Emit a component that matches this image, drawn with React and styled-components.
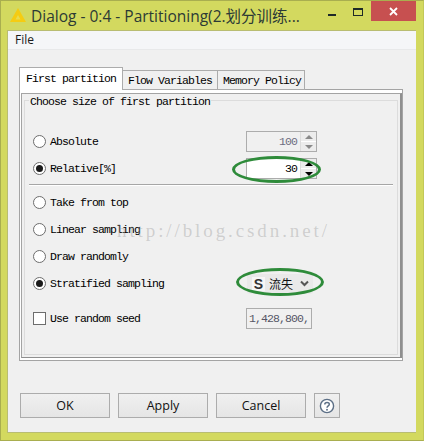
import React from 'react'
import styled, { createGlobalStyle } from 'styled-components'

const Global = createGlobalStyle`
html, body { margin: 0; padding: 0; }
* { box-sizing: border-box; }
`

const monoText = `
font-family: "Liberation Mono", "DejaVu Sans Mono", monospace;
font-size: 11.5px;
letter-spacing: -0.9px;
color: #000;
white-space: nowrap;
`

const Window = styled.div`
position: relative;
width: 424px;
height: 441px;
background: #d3d95f;
border: 1px solid #a9ae4f;
border-right-color: #c2c858;
display: flex;
flex-direction: column;
padding: 0 7px 7px 6px;
overflow: hidden;
`
const TitleBar = styled.div`
height: 29px;
flex: none;
display: flex;
align-items: flex-start;
`
const AppIcon = styled.svg`
width: 16px;
height: 14px;
margin: 7px 0 0 3px;
flex: none;
`
const Title = styled.div`
font-family: "Open Sans", "Noto Sans CJK SC", sans-serif;
font-size: 15.5px;
line-height: 21px;
margin: 5px 0 0 5px;
color: #2c3a35;
white-space: nowrap;
width: 277px;
flex: none;
`
const Minimize = styled.div`
width: 8px;
height: 2px;
background: #1e2a28;
margin: 13px 0 0 20px;
flex: none;
`
const Maximize = styled.div`
width: 10px;
height: 8px;
border: 1px solid #1e2a28;
border-top-width: 2px;
margin: 7px 0 0 17px;
flex: none;
`
const Close = styled.div`
width: 45px;
height: 20px;
background: #c75050;
margin-left: 8px;
flex: none;
display: flex;
align-items: center;
justify-content: center;
`
const Client = styled.div`
flex: 1;
background: #f0f0f0;
border: 1px solid #b9bd72;
border-width: 1px 0 1px 1px;
display: flex;
flex-direction: column;
`
const MenuBar = styled.div`
height: 19px;
background: #f5f6f8;
border-bottom: 1px solid #e8e9ea;
font-family: "Open Sans", sans-serif;
font-size: 12px;
line-height: 18px;
color: #1a1a1a;
padding-left: 7px;
flex: none;
`
const Body = styled.div`
flex: 1;
display: flex;
flex-direction: column;
padding: 17px 13px 0 11px;
`
const Tabs = styled.div`
display: flex;
align-items: flex-end;
height: 23px;
margin-bottom: -1px;
position: relative;
z-index: 1;
flex: none;
`
const Tab = styled.div`
${monoText}
height: ${p => (p.$active ? '23px' : '20px')};
width: ${p => p.$w}px;
background: ${p => (p.$active ? '#fff' : '#f0f0f0')};
border: 1px solid #acacac;
border-bottom: ${p => (p.$active ? 'none' : '1px solid #acacac')};
border-left: ${p => (p.$first || p.$active ? '1px solid #acacac' : 'none')};
padding-left: ${p => (p.$active ? 6 : 5)}px;
line-height: ${p => (p.$active ? '21px' : '20px')};
`
const PanelOuter = styled.div`
width: 384px;
height: 272px;
border: 1px solid #a4a4a4;
background: #fff;
padding: 3px 0 0 1px;
flex: none;
`
const PanelInner = styled.div`
width: 381px;
height: 265px;
border: 1px solid #a4a4a4;
border-right: 2px solid #8f8f8f;
border-bottom-color: #8f8f8f;
background: #f0f0f0;
padding: 6px 3px 2px 2px;
`
const Group = styled.div`
position: relative;
height: 255px;
width: 374px;
border: 1px solid #dcdcdc;
padding: 27px 4px 0 8px;
`
const Legend = styled.div`
${monoText}
position: absolute;
left: 4px;
top: -6px;
background: #f0f0f0;
padding: 0 1px;
line-height: 14px;
`
const Row = styled.div`
height: 27px;
display: flex;
align-items: center;
margin-top: ${p => p.$gap || 0}px;
`
const Radio = styled.span`
width: 13px;
height: 13px;
border-radius: 50%;
border: 1px solid #6d6d6d;
background: #fff;
flex: none;
display: flex;
align-items: center;
justify-content: center;
&::after {
  content: '';
  display: ${p => (p.$on ? 'block' : 'none')};
  width: 7px;
  height: 7px;
  border-radius: 50%;
  background: #1a1a1a;
}
`
const Check = styled.span`
width: 13px;
height: 13px;
border: 1px solid #6d6d6d;
background: #fff;
flex: none;
`
const Label = styled.span`
${monoText}
margin-left: 4px;
flex: 1;
`
const Spinner = styled.div`
width: 71px;
height: 21px;
border: 1px solid #acacac;
background: ${p => (p.$disabled ? '#f0f0f0' : '#fff')};
display: flex;
margin-right: 76px;
flex: none;
`
const SpinValue = styled.div`
${monoText}
flex: 1;
text-align: right;
line-height: 19px;
padding-right: 3px;
color: ${p => (p.$disabled ? '#6d6d80' : '#000')};
`
const SpinButtons = styled.div`
width: 16px;
display: flex;
flex-direction: column;
border-left: 1px solid #dcdcdc;
`
const SpinButton = styled.div`
flex: 1;
display: flex;
align-items: center;
justify-content: center;
background: #ececec;
border-bottom: ${p => (p.$top ? '1px solid #fff' : 'none')};
&::after {
  content: '';
  width: 0;
  height: 0;
  border-left: 4px solid transparent;
  border-right: 4px solid transparent;
  ${p => (p.$top ? 'border-bottom' : 'border-top')}: 4px solid ${p => (p.$disabled ? '#8a8a8a' : '#000')};
}
`
const Separator = styled.div`
height: 2px;
margin: 2px 0 3px -4px;
width: 364px;
background: #a6a6a6;
border-bottom: 1px solid #fff;
`
const Combo = styled.div`
width: 66px;
height: 20px;
margin-right: 80px;
background: #e9e9e9;
border-radius: 3px;
display: flex;
align-items: center;
flex: none;
padding-left: 5px;
`
const ComboBadge = styled.span`
width: 13px;
height: 14px;
background: #f6f6f6;
font-family: "Liberation Sans", sans-serif;
font-weight: bold;
font-size: 14px;
line-height: 14px;
text-align: center;
color: #333;
flex: none;
`
const ComboText = styled.span`
font-family: "Noto Sans CJK SC", sans-serif;
font-size: 12px;
line-height: 16px;
color: #111;
margin-left: 4px;
width: 31px;
flex: none;
`
const SeedField = styled.div`
${monoText}
width: 66px;
height: 21px;
border: 1px solid #acacac;
background: #f0f0f0;
color: #555566;
line-height: 19px;
padding-left: 2px;
margin-right: 81px;
flex: none;
overflow: hidden;
`
const Footer = styled.div`
display: flex;
gap: 8px;
margin: 32px 0 0 1px;
flex: none;
`
const Button = styled.div`
width: ${p => p.$w || 90}px;
height: 25px;
border: 1px solid #acacac;
background: linear-gradient(#f0f0f0, #e5e5e5);
font-family: "Open Sans", sans-serif;
font-size: 12.5px;
line-height: 23px;
text-align: center;
color: #111;
display: flex;
align-items: center;
justify-content: center;
`
const Watermark = styled.div`
position: absolute;
left: 116px;
top: 218px;
font-family: "Liberation Serif", serif;
font-size: 19px;
letter-spacing: 2.9px;
line-height: 24px;
color: rgba(150, 150, 150, 0.38);
white-space: nowrap;
pointer-events: none;
z-index: 3;
`
const Ring = styled.div`
position: absolute;
left: ${p => p.$x}px;
top: ${p => p.$y}px;
width: ${p => p.$w}px;
height: ${p => p.$h}px;
border: 3px solid #2e8b3a;
border-radius: 50%;
pointer-events: none;
z-index: 4;
`

function App() {
  return (
    <>
      <Global />
      <Window>
        <TitleBar>
          <AppIcon viewBox="0 0 16 14">
            <path d="M8 0 L16 14 L0 14 Z" fill="#f5cc12" />
            <path d="M8 7 L5.5 11.5 L10.5 11.5 Z" fill="#e9dc4e" />
          </AppIcon>
          <Title>Dialog - 0:4 - Partitioning(2.划分训练...</Title>
          <Minimize />
          <Maximize />
          <Close>
            <svg width="9" height="9" viewBox="0 0 9 9">
              <path d="M1 1 L8 8 M8 1 L1 8" stroke="#fff" strokeWidth="1.8" />
            </svg>
          </Close>
        </TitleBar>
        <Client>
          <MenuBar>File</MenuBar>
          <Body>
            <Tabs>
              <Tab $active $first $w={104}>First partition</Tab>
              <Tab $w={95}>Flow Variables</Tab>
              <Tab $w={87}>Memory Policy</Tab>
            </Tabs>
            <PanelOuter>
              <PanelInner>
                <Group>
                  <Legend>Choose size of first partition</Legend>
                  <Row>
                    <Radio />
                    <Label>Absolute</Label>
                    <Spinner $disabled>
                      <SpinValue $disabled>100</SpinValue>
                      <SpinButtons>
                        <SpinButton $top $disabled />
                        <SpinButton $disabled />
                      </SpinButtons>
                    </Spinner>
                  </Row>
                  <Row>
                    <Radio $on />
                    <Label>Relative[%]</Label>
                    <Spinner>
                      <SpinValue>30</SpinValue>
                      <SpinButtons>
                        <SpinButton $top />
                        <SpinButton />
                      </SpinButtons>
                    </Spinner>
                  </Row>
                  <Separator />
                  <Row>
                    <Radio />
                    <Label>Take from top</Label>
                  </Row>
                  <Row>
                    <Radio />
                    <Label>Linear sampling</Label>
                  </Row>
                  <Row>
                    <Radio />
                    <Label>Draw randomly</Label>
                  </Row>
                  <Row>
                    <Radio $on />
                    <Label>Stratified sampling</Label>
                    <Combo>
                      <ComboBadge>S</ComboBadge>
                      <ComboText>流失</ComboText>
                      <svg width="9" height="7" viewBox="0 0 9 7">
                        <path d="M1 1.5 L4.5 5 L8 1.5" fill="none" stroke="#555" strokeWidth="2" />
                      </svg>
                    </Combo>
                  </Row>
                  <Row $gap={8}>
                    <Check />
                    <Label>Use random seed</Label>
                    <SeedField>1,428,800,</SeedField>
                  </Row>
                </Group>
              </PanelInner>
            </PanelOuter>
            <Footer>
              <Button>OK</Button>
              <Button>Apply</Button>
              <Button>Cancel</Button>
              <Button $w={26}>
                <svg width="16" height="16" viewBox="0 0 16 16">
                  <circle cx="8" cy="8" r="6.6" fill="#fff" stroke="#5c6f86" strokeWidth="1.4" />
                  <path d="M5.8 6.4 C5.8 3.8 10.3 3.8 10.3 6.3 C10.3 8 8 7.8 8 9.8" fill="none" stroke="#5c6f86" strokeWidth="1.5" />
                  <circle cx="8" cy="11.8" r="0.95" fill="#5c6f86" />
                </svg>
              </Button>
            </Footer>
          </Body>
        </Client>
        <Watermark>http://blog.csdn.net/</Watermark>
        <Ring $x={231} $y={155} $w={89} $h={27} />
        <Ring $x={235} $y={267} $w={88} $h={28} />
      </Window>
    </>
  )
}

export default App
